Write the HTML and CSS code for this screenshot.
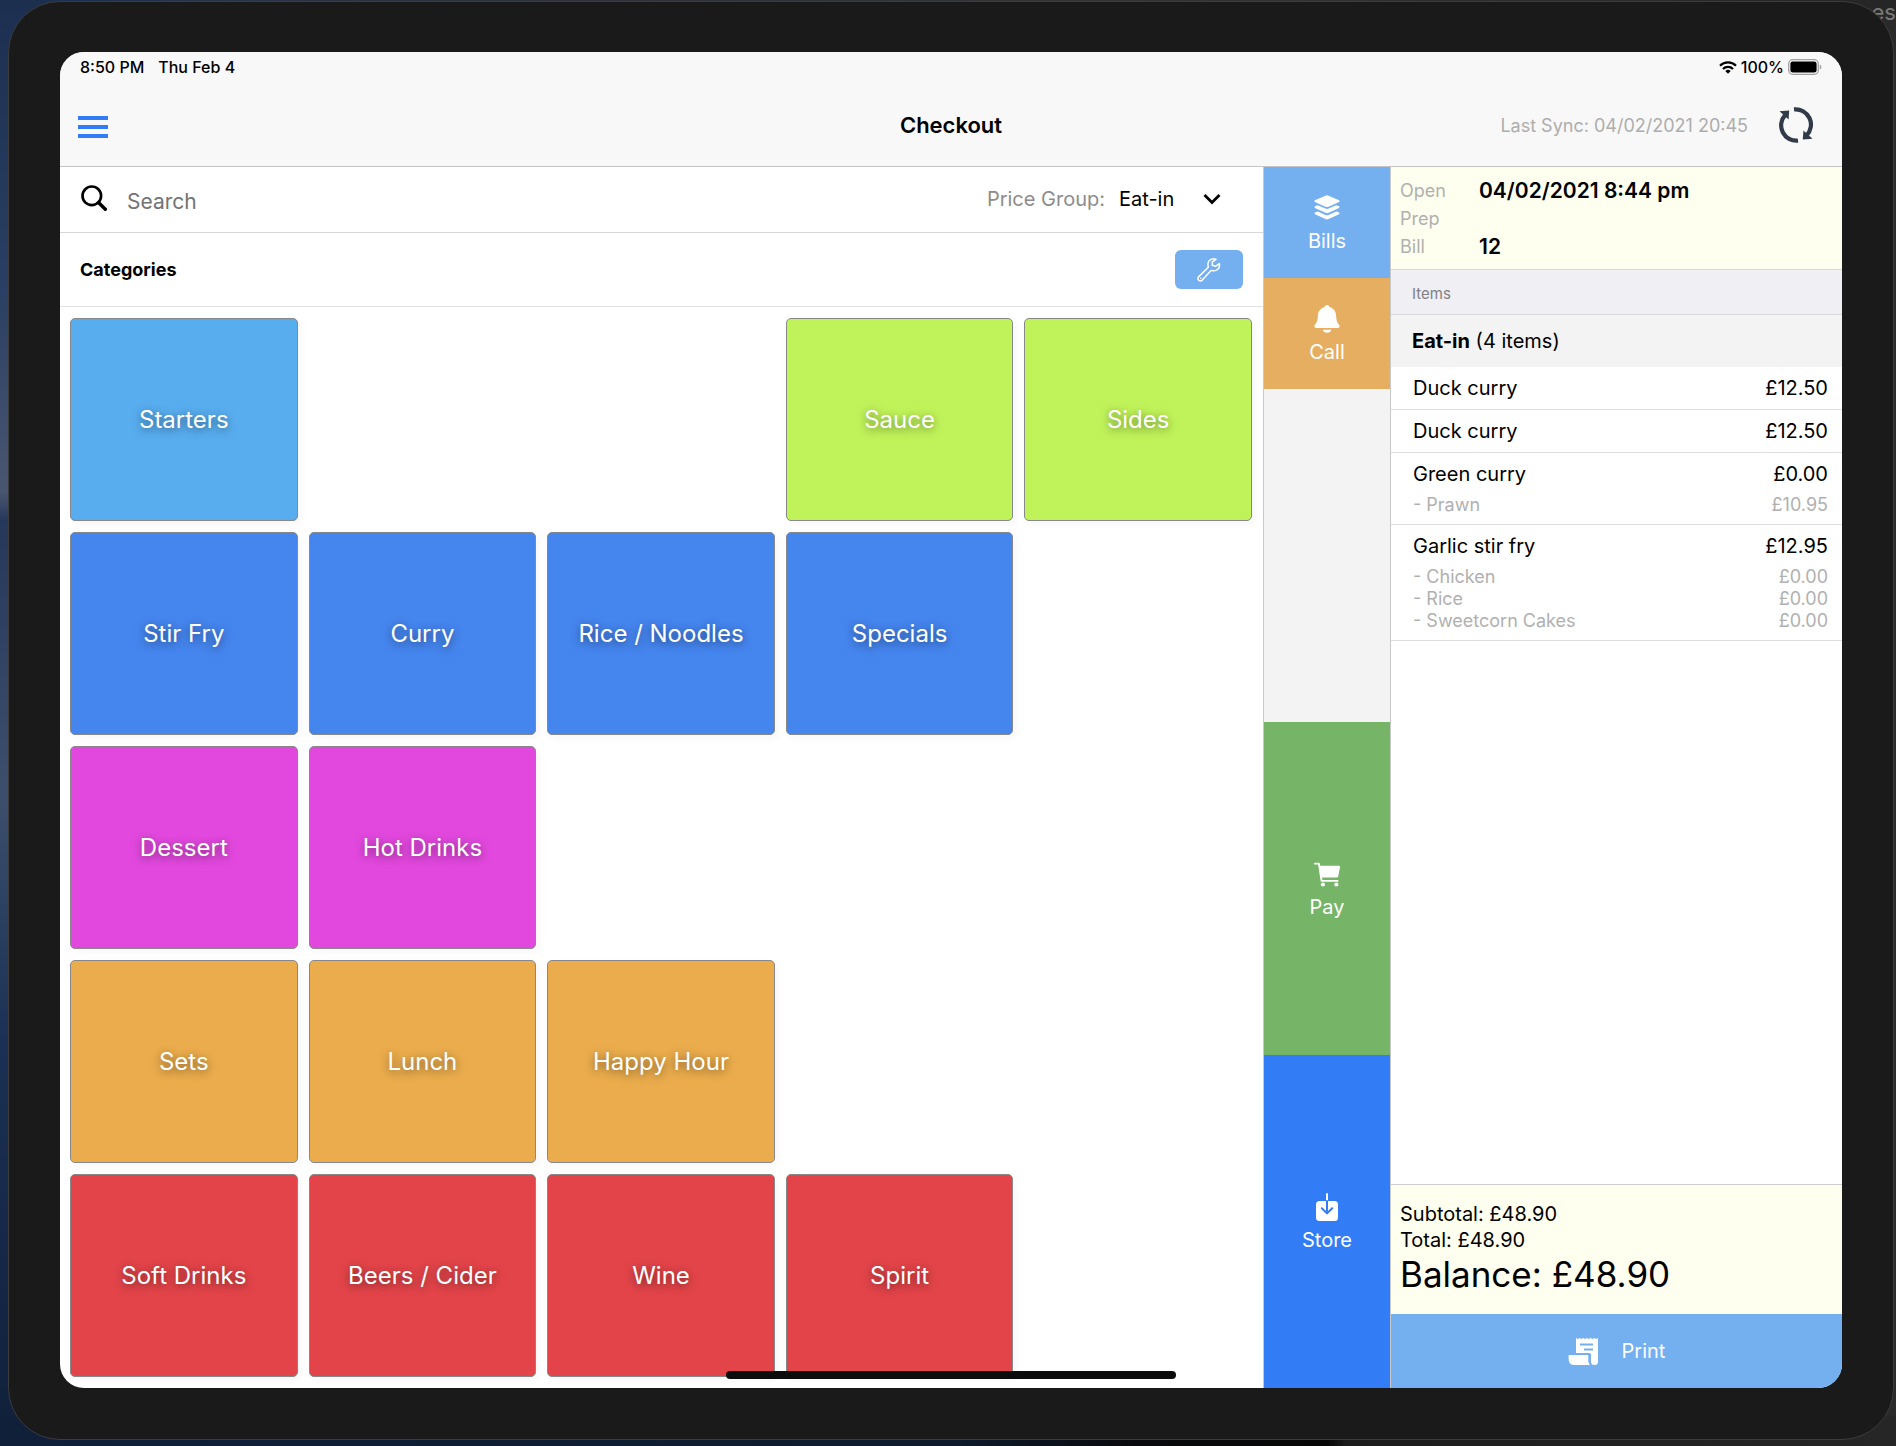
FILE: index.html
```html
<!DOCTYPE html>
<html lang="en">
<head>
<meta charset="utf-8">
<title>Checkout</title>
<meta name="viewport" content="width=device-width, initial-scale=1">
<link rel="stylesheet" href="styles.css">
</head>
<body>
<span class="desktop-text">es</span>
<div class="device">
  <div class="screen">
    <header class="top">
      <div class="status">
        <span>8:50 PM</span>
        <span>Thu Feb 4</span>
        <span class="status-right">
          <svg width="18" height="13" viewBox="0 0 18 13" aria-hidden="true"><g fill="none" stroke="#000" stroke-width="2.3"><path d="M1 4.7a11.4 11.4 0 0 1 16 0"/><path d="M4 8a7 7 0 0 1 10 0"/></g><path d="M9 12.8 6.3 10a3.8 3.8 0 0 1 5.4 0z"/></svg>
          <span>100%</span>
          <svg width="34" height="16" viewBox="0 0 34 16" aria-hidden="true"><rect x=".7" y=".7" width="29.6" height="14.6" rx="4" fill="none" stroke="#a0a0a0" stroke-width="1.3"/><rect x="2.4" y="2.4" width="26.2" height="11.2" rx="2.4"/><path d="M31.8 5.4c2 .8 2 4.4 0 5.2z" fill="#a0a0a0"/></svg>
        </span>
      </div>
      <div class="navbar">
        <div class="nav-side">
          <button class="plain menu" type="button" aria-label="Menu"><svg width="30" height="28" viewBox="0 0 30 28"><path d="M0 5h30v4H0zM0 14h30v4H0zM0 23h30v4H0z" fill="#327cf6"/></svg></button>
        </div>
        <h1>Checkout</h1>
        <div class="nav-side nav-end">
          <span class="sync-text">Last Sync: 04/02/2021 20:45</span>
          <button class="plain" type="button" aria-label="Sync"><svg width="36" height="36" viewBox="0 0 36 36"><g fill="none" stroke="#303a48" stroke-width="4.2"><path d="M16 2.4a15.3 15.3 0 0 1 12.5 26"/><path d="M20 33.6A15.3 15.3 0 0 1 7.2 8"/></g><path d="M1.5 4.3 11.2 3.5 10.6 12.5z" fill="#303a48"/><path d="M34.5 31.7 24.8 32.5 25.4 23.5z" fill="#303a48"/></svg></button>
        </div>
      </div>
    </header>
    <div class="workspace">
      <main class="catalog">
        <div class="search-row">
          <label class="search">
            <svg width="26" height="26" viewBox="0 0 26 26" role="img" aria-label="Search"><circle cx="10.8" cy="10.8" r="9.3" fill="none" stroke="#000" stroke-width="2.7"/><path d="m17.5 17.5 6.8 6.8" stroke="#000" stroke-width="3.4" stroke-linecap="round"/></svg>
            <input type="search" placeholder="Search">
          </label>
          <label class="group-label" for="group">Price Group:</label>
          <span class="select">
            <select id="group"><option>Eat-in</option></select>
            <svg width="18" height="12" viewBox="0 0 18 12" aria-hidden="true"><path d="m1.5 2 7.5 7.5L16.5 2" fill="none" stroke="#000" stroke-width="2.8"/></svg>
          </span>
        </div>
        <div class="cat-head">
          <h2>Categories</h2>
          <button class="edit" type="button" aria-label="Edit categories"><svg width="24" height="24" viewBox="0 0 24 24"><path d="M22.3 5.6 18.5 8.3 15.2 7.3 15.4 3.8 19 1.3C16.5.5 13.6.9 11.9 3.1 10.7 4.7 10.7 6.4 11.2 8.1 11.4 8.9 11.2 9.5 10.6 10L1.8 18.6C.8 19.7.8 21.3 1.7 22.2 2.7 23.2 4.3 23.1 5.3 22.1L13.6 13C14.2 12.4 14.8 12.3 15.5 12.5 19.5 13.5 23.5 10.4 22.3 5.6z" fill="none" stroke="#fff" stroke-width="1.5" stroke-linejoin="round"/><circle cx="3.8" cy="20.2" r=".8" fill="#fff"/></svg></button>
        </div>
        <div class="tiles">
          <button type="button" class="tile sky">Starters</button>
          <button type="button" class="tile lime col4">Sauce</button>
          <button type="button" class="tile lime">Sides</button>
          <button type="button" class="tile blue col1">Stir Fry</button>
          <button type="button" class="tile blue">Curry</button>
          <button type="button" class="tile blue">Rice / Noodles</button>
          <button type="button" class="tile blue">Specials</button>
          <button type="button" class="tile pink col1">Dessert</button>
          <button type="button" class="tile pink">Hot Drinks</button>
          <button type="button" class="tile amber col1">Sets</button>
          <button type="button" class="tile amber">Lunch</button>
          <button type="button" class="tile amber">Happy Hour</button>
          <button type="button" class="tile red col1">Soft Drinks</button>
          <button type="button" class="tile red">Beers / Cider</button>
          <button type="button" class="tile red">Wine</button>
          <button type="button" class="tile red">Spirit</button>
        </div>
      </main>
      <nav class="actions" aria-label="Bill actions">
        <button type="button" class="action bills">
          <svg width="28" height="28" viewBox="0 0 28 28" fill="#fff"><path d="M12.4 1.7q1.6-.7 3.2 0l10 4.300q2 1.100 0 2.200l-10 4.500q-1.600.7-3.200 0l-10-4.500q-2-1.100 0-2.200z"/><path d="m2.500 12 2.300-.8 7.600 3.400q1.600.7 3.200 0l7.600-3.400 2.300.8q2 1.200 0 2.300l-9.900 4.500q-1.600.7-3.200 0l-9.900-4.500q-2-1.100 0-2.300z"/><path d="m2.500 18.300 2.300-.8 7.600 3.400q1.600.7 3.200 0l7.600-3.400 2.300.8q2 1.200 0 2.300l-9.900 4.500q-1.600.7-3.200 0l-9.900-4.500q-2-1.100 0-2.300z"/></svg>
          Bills
        </button>
        <button type="button" class="action call">
          <svg width="28" height="28" viewBox="0 0 28 28" fill="#fff"><path d="M14 0c1.300 0 2.200.8 2.400 2 4 1 6.400 4.200 6.700 8.600.3 5.200 1 7 3 9.200 1.100 1.300.4 3.200-1.400 3.200H3.300c-1.800 0-2.500-1.900-1.400-3.200 2-2.200 2.700-4 3-9.200C5.200 6.200 7.600 3 11.600 2 11.800.8 12.700 0 14 0z"/><path d="M9.700 24.800h8.600c-.4 1.900-2.200 3-4.300 3s-3.900-1.100-4.300-3z"/></svg>
          Call
        </button>
        <button type="button" class="action pay">
          <svg width="28" height="28" viewBox="0 0 28 28" fill="#fff"><path d="M1.800 3.600h4.100l2.700 17.300h16" fill="none" stroke="#fff" stroke-width="1.9" stroke-linecap="round" stroke-linejoin="round"/><path d="M6.300 5.800h19.500q1.400 0 1.200 1.400l-1.700 8.900q-.3 1.500-1.800 1.500H8.300z"/><circle cx="9.9" cy="24.500" r="2.100"/><circle cx="23.400" cy="24.500" r="2.100"/></svg>
          Pay
        </button>
        <button type="button" class="action store">
          <svg width="28" height="28" viewBox="0 0 28 28"><rect x="3" y="8" width="22" height="20" rx="3.5" fill="#fff"/><path d="M14 1v7" stroke="#fff" stroke-width="2" stroke-linecap="round"/><path d="M14 8v12M8.800 15.200l5.200 5.200 5.200-5.200" fill="none" stroke="#327cf6" stroke-width="2" stroke-linecap="round" stroke-linejoin="round"/></svg>
          Store
        </button>
      </nav>
      <aside class="order">
        <dl class="bill-info">
          <dt>Open</dt><dd>04/02/2021 8:44 pm</dd>
          <dt>Prep</dt><dd></dd>
          <dt>Bill</dt><dd>12</dd>
        </dl>
        <h3 class="items-head">Items</h3>
        <p class="group-head"><b>Eat-in</b> (4 items)</p>
        <ul class="items">
          <li><div class="line"><span>Duck curry</span><span>£12.50</span></div></li>
          <li><div class="line"><span>Duck curry</span><span>£12.50</span></div></li>
          <li><div class="line"><span>Green curry</span><span>£0.00</span></div>
            <ul class="mods">
              <li class="line"><span>- Prawn</span><span>£10.95</span></li>
            </ul></li>
          <li><div class="line"><span>Garlic stir fry</span><span>£12.95</span></div>
            <ul class="mods">
              <li class="line"><span>- Chicken</span><span>£0.00</span></li>
              <li class="line"><span>- Rice</span><span>£0.00</span></li>
              <li class="line"><span>- Sweetcorn Cakes</span><span>£0.00</span></li>
            </ul></li>
        </ul>
        <div class="totals">
          <p>Subtotal: £48.90</p>
          <p>Total: £48.90</p>
          <p class="balance">Balance: £48.90</p>
        </div>
        <button type="button" class="print">
          <svg width="30" height="28" viewBox="0 0 30 28" fill="#fff"><path d="M8 1l1.800 1 1.800-1 1.800 1 1.800-1 1.900 1 1.800-1 1.800 1 1.800-1 1.900 1 1.800-1 1.900 1 1.900-1v23.500a3.500 3.500 0 0 1-7 0V17.500q0-1.500-1.500-1.500H8z"/><path d="M1.500 18H19.500q.8 0 .8 1v5q0 2.500 1.700 4H5.500Q.5 28 .5 20V19q0-1 1-1z"/><path d="M12 7.500h13M16 12.500h9" stroke="#74aff0" stroke-width="2"/></svg>
          Print
        </button>
      </aside>
    </div>
    <div class="home-bar"></div>
  </div>
</div>
</body>
</html>
```
FILE: styles.css
```css
* {
  box-sizing: border-box;
}

body {
  position: relative;
  display: flex;
  min-height: 100vh;
  margin: 0;
  padding: 1px 2px 6px 8px;
  overflow-x: hidden;
  background:
    linear-gradient(90deg, #10203a, #0e1a2c 50%, #08090c 60%, #060606 70%, #1c1c1c 71%, #262626) bottom / 100% 30px no-repeat,
    linear-gradient(90deg, #1c2f50, #2a3340 20%, #333 60%, #262626) top / 100% 10px no-repeat,
    linear-gradient(90deg, transparent 50%, #2a2a2a 50%),
    linear-gradient(#1c2f50, #2a3f63 20%, #4a5670 34%, #26385a 36%, #3c506c 55%, #1b3054 72%, #10203a);
  font-family: Inter, "Liberation Sans", sans-serif;
  font-size: 20px;
  color: #000;
}

h1, h2, h3, p, ul, dl, dd {
  margin: 0;
  padding: 0;
}

ul {
  list-style: none;
}

button, input, select {
  font: inherit;
  color: inherit;
}

button {
  margin: 0;
  border: 0;
  padding: 0;
}

svg {
  display: block;
  flex: none;
}

.desktop-text {
  position: absolute;
  top: 0;
  right: 0;
  font-size: 22px;
  line-height: 24px;
  color: #7a7a7a;
}

.device {
  position: relative;
  display: flex;
  flex: 1;
  border: 1px solid #3a3c3e;
  border-radius: 52px;
  padding: 50px 51px 51px;
  background: #1a1a1a;
}

.screen {
  position: relative;
  display: flex;
  flex: 1;
  flex-direction: column;
  border-radius: 24px;
  overflow: hidden;
  background: #fff;
}

/* Status bar and title bar */

.top {
  flex: none;
  border-bottom: 1px solid #c4c4c6;
  background: #f8f8f8;
}

.status {
  display: flex;
  align-items: center;
  gap: 14px;
  height: 30px;
  padding: 0 20px;
  font-size: 16px;
  font-weight: 500;
}

.status-right {
  display: flex;
  align-items: center;
  gap: 4px;
  margin-left: auto;
}

.navbar {
  display: flex;
  align-items: center;
  height: 84px;
  padding: 2px 28px 0;
}

.nav-side {
  display: flex;
  flex: 1;
}

.nav-end {
  align-items: center;
  justify-content: flex-end;
  gap: 30px;
}

h1 {
  font-size: 22px;
  font-weight: 600;
}

.plain {
  background: none;
}

.menu {
  margin-left: -10px;
}

.sync-text {
  font-size: 18px;
  color: #adadad;
}

/* Catalogue */

.workspace {
  display: flex;
  flex: 1;
}

.catalog {
  display: flex;
  flex: 1;
  flex-direction: column;
  min-width: 0;
}

.search-row {
  display: flex;
  flex: none;
  align-items: center;
  height: 66px;
  padding: 0 42px 2px 21px;
  border-bottom: 1px solid #d8d8dc;
}

.search {
  display: flex;
  flex: 1;
  align-items: center;
  gap: 20px;
}

.search svg {
  margin-bottom: 2px;
}

.search input {
  flex: 1;
  min-width: 0;
  border: 0;
  padding: 5px 0 0;
  outline: 0;
  background: none;
  font-size: 21px;
}

.search input::placeholder {
  color: #737373;
  opacity: 1;
}

.group-label {
  color: #8c8c8c;
}

.select {
  display: grid;
  width: 102px;
  margin-left: 14px;
  align-items: center;
}

.select > * {
  grid-area: 1 / 1;
}

.select select {
  width: 100%;
  border: 0;
  padding: 0;
  appearance: none;
  background: none;
}

.select svg {
  justify-self: end;
  pointer-events: none;
}

.cat-head {
  display: flex;
  flex: none;
  align-items: center;
  justify-content: space-between;
  height: 74px;
  padding: 0 20px;
  border-bottom: 1px solid #e2e2e2;
}

h2 {
  font-size: 18px;
  font-weight: 700;
}

.edit {
  display: flex;
  align-items: center;
  justify-content: center;
  width: 68px;
  height: 39px;
  border-radius: 6px;
  background: #74aff0;
}

.tiles {
  display: grid;
  flex: 1;
  grid-template-columns: repeat(5, 1fr);
  grid-template-rows: repeat(5, 1fr);
  gap: 11px;
  padding: 11px 11px 11px 10px;
}

.tile {
  min-width: 0;
  border: 1px solid #86888a;
  border-radius: 5px;
  box-shadow: 3px 3px 8px rgba(0, 0, 0, 0.04);
  font-size: 24px;
  color: #fff;
  text-shadow: 0 2px 8px rgba(0, 0, 0, 0.5);
}

.col1 { grid-column: 1; }
.col4 { grid-column: 4; }

.sky { background: #58adef; }
.lime { background: #c0f35a; }
.blue { background: #4585ee; }
.pink { background: #e248de; }
.amber { background: #eaac4c; }
.red { background: #e24449; }

/* Action column */

.actions {
  display: grid;
  flex: none;
  grid-template-rows: 1fr 1fr 3fr 3fr 3fr;
  width: 128px;
  border: solid #c9c9cc;
  border-width: 0 1px;
  background: #f3f3f3;
}

.action {
  display: flex;
  flex-direction: column;
  align-items: center;
  justify-content: center;
  gap: 6px;
  padding-top: 3px;
  line-height: 26px;
  color: #fff;
}

.bills { background: #74aff0; }
.call { background: #e5ae60; }
.pay { grid-row: 4; background: #76b567; }
.store { grid-row: 5; background: #327cf6; }

/* Order panel */

.order {
  display: flex;
  flex: none;
  flex-direction: column;
  width: 451px;
}

.bill-info {
  display: grid;
  grid-template-columns: 79px 1fr;
  grid-auto-rows: 28px;
  align-items: center;
  padding: 9px;
  border-bottom: 1px solid #d8d8da;
  background: #feffef;
}

.bill-info dt {
  font-size: 18px;
  color: #b0b0b0;
}

.bill-info dd {
  font-size: 21px;
  font-weight: 600;
}

.items-head {
  padding: 4px 21px 0;
  border-bottom: 1px solid #d8d8da;
  background: #efeff4;
  font-size: 15px;
  font-weight: 400;
  line-height: 40px;
  color: #808084;
}

.group-head {
  padding: 0 21px;
  background: #f3f3f3;
  line-height: 52px;
}

.group-head b {
  font-weight: 700;
}

.items > li {
  padding: 8px 14px 8px 22px;
  border-bottom: 1px solid #dedee0;
  line-height: 26px;
}

.line {
  display: flex;
  justify-content: space-between;
}

.mods {
  margin-top: 7px;
  font-size: 18px;
  line-height: 22px;
  color: #b0b0b0;
}

.totals {
  margin-top: auto;
  padding: 16px 9px 18px;
  border-top: 1px solid #cfcfd2;
  background: #feffef;
  line-height: 26px;
}

.balance {
  font-size: 35px;
  line-height: 43px;
}

.print {
  display: flex;
  flex: none;
  align-items: center;
  justify-content: center;
  gap: 24px;
  height: 74px;
  background: #74aff0;
  color: #fff;
}

.home-bar {
  position: absolute;
  bottom: 9px;
  left: 50%;
  width: 450px;
  height: 8px;
  margin-left: -225px;
  border-radius: 4px;
  background: #0c0c0c;
}
```
